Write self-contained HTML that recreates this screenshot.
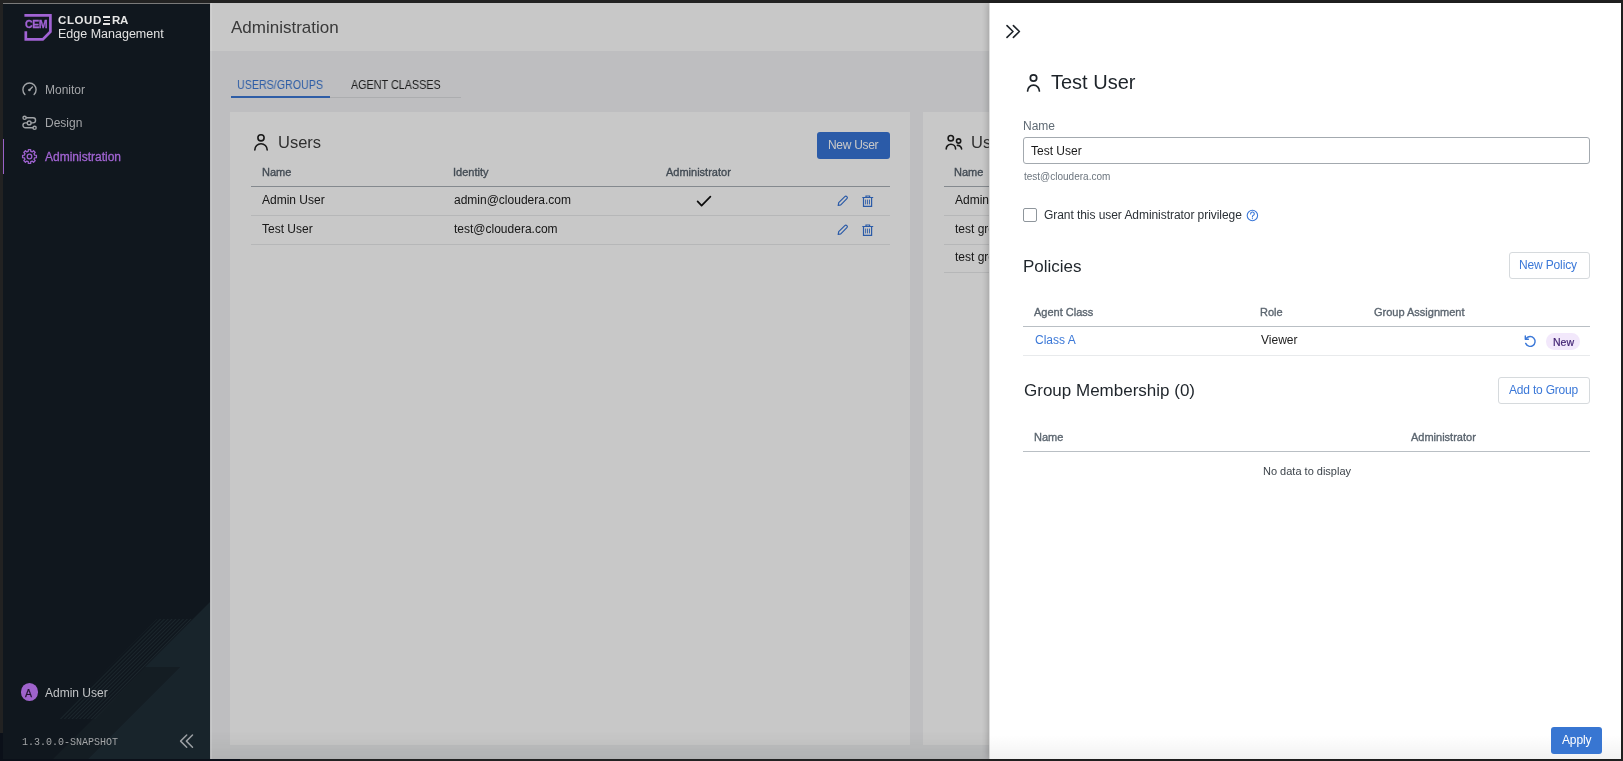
<!DOCTYPE html>
<html><head><meta charset="utf-8">
<style>
*{box-sizing:border-box;margin:0;padding:0}
html,body{width:1623px;height:761px;overflow:hidden;background:#222;font-family:"Liberation Sans",sans-serif}
.b{position:absolute}
.t{position:absolute;white-space:nowrap;line-height:1}
svg{position:absolute;overflow:visible}
.t{will-change:transform}
</style></head><body>
<!-- frame highlight line -->
<div class="b" style="left:0;top:733px;width:3px;height:28px;background:#0b1019"></div>
<div class="b" style="left:0;top:759px;width:240px;height:2px;background:#0b1019"></div>
<div class="b" style="left:3px;top:3px;width:207px;height:1px;background:#7a7a7a"></div>

<!-- ============ SIDEBAR ============ -->
<div class="b" style="left:3px;top:4px;width:207px;height:755px;background:#10171e"></div>
<svg style="left:0;top:0" width="210" height="759" viewBox="0 0 210 759">
  <defs>
    <clipPath id="sc"><rect x="3" y="4" width="207" height="755"/></clipPath>
    <pattern id="stripes" patternUnits="userSpaceOnUse" width="2.7" height="2.7" patternTransform="rotate(45)">
      <rect x="0" y="0" width="0.9" height="2.7" fill="#1c272d"/>
    </pattern>
  </defs>
  <g clip-path="url(#sc)">
    <polygon points="51,761 145,667 180,667 86,761" fill="#141d23"/>
    <polygon points="210,602 145,667 180,667 86,761 210,761" fill="#18242b"/>
    <polygon points="157,619 192,619 95,719 58,719" fill="url(#stripes)"/>
  </g>
</svg>
<!-- logo -->
<svg style="left:0;top:0" width="60" height="50" viewBox="0 0 60 50">
  <path d="M24.4,15.3 H50.4 V31.8 L42.8,39.4 H25.8 V31.3" fill="none" stroke="#a163d4" stroke-width="2.7"/>
</svg>
<div class="t" style="left:24.9px;top:19.1px;font-size:10.6px;font-weight:700;color:#a163d4;letter-spacing:-0.45px;-webkit-text-stroke:0.3px #a163d4">CEM</div>
<div class="t" style="left:57.6px;top:14.8px;font-size:11.5px;font-weight:700;color:#e6e6e6;letter-spacing:0.6px">CLOUD</div>
<div class="b" style="left:103.3px;top:16.2px;width:6.4px;height:1.7px;background:#e6e6e6"></div>
<div class="b" style="left:104.2px;top:19.6px;width:5.5px;height:1.7px;background:#e6e6e6"></div>
<div class="b" style="left:103.3px;top:23px;width:6.4px;height:1.7px;background:#e6e6e6"></div>
<div class="t" style="left:112.2px;top:14.8px;font-size:11.5px;font-weight:700;color:#e6e6e6;letter-spacing:-0.2px">RA</div>
<div class="t" style="left:58px;top:27.8px;font-size:12.5px;color:#e2e2e2">Edge Management</div>

<!-- nav -->
<svg style="left:0;top:0" width="60" height="180" viewBox="0 0 60 180" fill="none" stroke="#a0a3a6" stroke-width="1.4" stroke-linecap="round">
  <path d="M24.9,94.4 A6.6,6.6 0 1 1 34.1,94.4"/>
  <path d="M29.4,90 L32.4,87"/>
  <circle cx="29.4" cy="90" r="1.3" fill="#a0a3a6" stroke="none"/>
  <path d="M26.3,117.8 H33 A2.55,2.55 0 0 1 33,122.9 H31.1 M27.3,122.9 H25.4 A2.45,2.45 0 0 0 25.4,127.8 H32.9"/>
  <circle cx="24.6" cy="117.8" r="1.6"/>
  <circle cx="29.2" cy="122.9" r="1.9"/>
  <circle cx="34.6" cy="127.8" r="1.6"/>
  <g stroke="#9e62cf" stroke-width="1.3" stroke-linejoin="round">
    <path d="M28.22,151.36 L28.35,149.59 L30.65,149.59 L30.78,151.36 L32.23,151.96 L33.57,150.80 L35.20,152.43 L34.04,153.77 L34.64,155.22 L36.41,155.35 L36.41,157.65 L34.64,157.78 L34.04,159.23 L35.20,160.57 L33.57,162.20 L32.23,161.04 L30.78,161.64 L30.65,163.41 L28.35,163.41 L28.22,161.64 L26.77,161.04 L25.43,162.20 L23.80,160.57 L24.96,159.23 L24.36,157.78 L22.59,157.65 L22.59,155.35 L24.36,155.22 L24.96,153.77 L23.80,152.43 L25.43,150.80 L26.77,151.96Z"/>
    <circle cx="29.5" cy="156.5" r="2.3"/>
  </g>
</svg>
<div class="t" style="left:45px;top:83.8px;font-size:12px;color:#a3a5a8">Monitor</div>
<div class="t" style="left:45px;top:117.2px;font-size:12px;color:#a3a5a8">Design</div>
<div class="b" style="left:3px;top:139px;width:1px;height:35px;background:#9a62c8"></div>
<div class="t" style="left:45px;top:151.1px;font-size:12px;color:#a164d2;-webkit-text-stroke:0.3px #a164d2">Administration</div>

<!-- footer -->
<div class="b" style="left:21px;top:683.4px;width:17px;height:17.2px;border-radius:50%;background:#9f63cc"></div>
<div class="t" style="left:25.3px;top:687.5px;font-size:10.5px;color:#22142f;-webkit-text-stroke:0.25px #22142f">A</div>
<div class="t" style="left:44.7px;top:686.7px;font-size:12px;color:#c2c4c6">Admin User</div>
<div class="t" style="left:21.6px;top:737.6px;font-size:10px;font-family:'Liberation Mono',monospace;color:#a3a5a7;transform:scaleY(1.1);transform-origin:0 7.7px">1.3.0.0-SNAPSHOT</div>
<svg style="left:0;top:0" width="210" height="759" viewBox="0 0 210 759" fill="none" stroke="#9a9ea2" stroke-width="1.5" stroke-linecap="round" stroke-linejoin="round">
  <path d="M186.7,735 L180.6,741.1 L186.7,747.3 M192.5,735 L186.4,741.1 L192.5,747.3"/>
</svg>

<!-- ============ MAIN ============ -->
<div class="b" style="left:210px;top:3px;width:1411px;height:756px;background:#f2f3f5"></div>
<div class="b" style="left:210px;top:3px;width:1411px;height:48px;background:#fff"></div>
<div class="t" style="left:230.8px;top:18.9px;font-size:17px;color:#4a4a4a">Administration</div>

<!-- tabs -->
<div class="t" style="left:237.3px;top:79px;font-size:12px;color:#3b77d4;transform:scaleX(0.889);transform-origin:0 0">USERS/GROUPS</div>
<div class="t" style="left:350.9px;top:79px;font-size:12px;color:#262626;transform:scaleX(0.899);transform-origin:0 0">AGENT CLASSES</div>
<div class="b" style="left:231px;top:97px;width:230px;height:1px;background:#dcdde0"></div>
<div class="b" style="left:231px;top:96px;width:99px;height:2px;background:#3b77d4"></div>

<!-- card 1 -->
<div class="b" style="left:230px;top:112px;width:680px;height:633px;background:#fff"></div>
<svg style="left:0;top:0" width="1000" height="260" viewBox="0 0 1000 260" fill="none" stroke="#1f1f1f" stroke-width="1.6" stroke-linecap="round">
  <circle cx="261" cy="137.8" r="3.1"/>
  <path d="M254.8,149.9 A6.2,6.2 0 0 1 267.2,149.9"/>
</svg>
<div class="t" style="left:278.3px;top:134px;font-size:16.5px;color:#3e3e3e">Users</div>
<div class="b" style="left:817px;top:132px;width:73px;height:27px;border-radius:3px;background:#3774d6"></div>
<div class="t" style="left:827.9px;top:139px;font-size:12px;color:#fff;letter-spacing:-0.3px">New User</div>

<div class="t" style="left:261.6px;top:166.7px;font-size:11px;color:#56616c;-webkit-text-stroke:0.35px #56616c">Name</div>
<div class="t" style="left:452.8px;top:166.7px;font-size:11px;color:#56616c;-webkit-text-stroke:0.35px #56616c">Identity</div>
<div class="t" style="left:666.2px;top:166.7px;font-size:11px;color:#56616c;-webkit-text-stroke:0.35px #56616c">Administrator</div>
<div class="b" style="left:251px;top:185.5px;width:639px;height:1.5px;background:#a9afb5"></div>

<div class="t" style="left:262.1px;top:193.5px;font-size:12px;color:#202020">Admin User</div>
<div class="t" style="left:453.5px;top:193.5px;font-size:12px;color:#202020">admin@cloudera.com</div>
<div class="b" style="left:251px;top:215px;width:639px;height:1px;background:#e9eaeb"></div>
<div class="t" style="left:262.1px;top:222.5px;font-size:12px;color:#202020">Test User</div>
<div class="t" style="left:453.5px;top:222.5px;font-size:12px;color:#202020">test@cloudera.com</div>
<div class="b" style="left:251px;top:244px;width:639px;height:1px;background:#e9eaeb"></div>

<svg style="left:0;top:0" width="1000" height="260" viewBox="0 0 1000 260" fill="none" stroke-linecap="round" stroke-linejoin="round">
  <path d="M697.6,201.3 L701.6,205.6 L710.4,196.6" stroke="#111" stroke-width="1.7"/>
  <g stroke="#3774d6" stroke-width="1.2">
    <path d="M838.2,205.5 L838.7,202.7 L844.8,196.6 A1.45,1.45 0 0 1 846.9,198.7 L840.8,204.8 Z"/>
    <path d="M862.3,197.5 H873.2 M866,197.0 V196.0 H869.6 V197.0 M863.5,197.8 V206.3 H871.6 V197.8" stroke-width="1.2" stroke-linejoin="miter" stroke-linecap="butt"/>
    <path d="M865.6,199.6 V204.4 M867.55,199.6 V204.4 M869.5,199.6 V204.4" stroke-width="0.9" stroke-linecap="butt"/>
    <path d="M838.2,234.5 L838.7,231.7 L844.8,225.6 A1.45,1.45 0 0 1 846.9,227.7 L840.8,233.8 Z"/>
    <path d="M862.3,226.5 H873.2 M866,226.0 V225.0 H869.6 V226.0 M863.5,226.8 V235.3 H871.6 V226.8" stroke-width="1.2" stroke-linejoin="miter" stroke-linecap="butt"/>
    <path d="M865.6,228.6 V233.4 M867.55,228.6 V233.4 M869.5,228.6 V233.4" stroke-width="0.9" stroke-linecap="butt"/>
  </g>
</svg>

<!-- card 2 -->
<div class="b" style="left:923px;top:112px;width:680px;height:633px;background:#fff"></div>
<svg style="left:0;top:0" width="1000" height="260" viewBox="0 0 1000 260" fill="none" stroke="#1f1f1f" stroke-width="1.6" stroke-linecap="round">
  <circle cx="950.8" cy="138.2" r="2.7"/>
  <path d="M946.2,149 A4.7,4.7 0 0 1 955.6,149"/>
  <circle cx="958.6" cy="141" r="2.1"/>
  <path d="M957.4,145.4 A3.8,3.8 0 0 1 961.6,149"/>
</svg>
<div class="t" style="left:971px;top:134px;font-size:16.5px;color:#3e3e3e">Users</div>
<div class="t" style="left:954.4px;top:166.7px;font-size:11px;color:#56616c;-webkit-text-stroke:0.35px #56616c">Name</div>
<div class="b" style="left:944px;top:185.5px;width:600px;height:1.5px;background:#a9afb5"></div>
<div class="t" style="left:954.9px;top:193.5px;font-size:12px;color:#202020">Admin Group</div>
<div class="b" style="left:944px;top:215px;width:600px;height:1px;background:#e9eaeb"></div>
<div class="t" style="left:954.9px;top:222.5px;font-size:12px;color:#202020">test group 1</div>
<div class="b" style="left:944px;top:244px;width:600px;height:1px;background:#e9eaeb"></div>
<div class="t" style="left:954.9px;top:251.3px;font-size:12px;color:#202020">test group 2</div>
<div class="b" style="left:944px;top:272px;width:600px;height:1px;background:#e9eaeb"></div>

<div class="b" style="left:210px;top:729px;width:780px;height:30px;background:linear-gradient(to bottom,rgba(0,0,0,0),rgba(0,0,0,0.065))"></div>
<!-- overlay -->
<div class="b" style="left:210px;top:3px;width:1411px;height:756px;background:rgba(0,0,0,0.216)"></div>

<div class="b" style="left:211px;top:3px;width:1px;height:756px;background:rgba(255,255,255,0.14)"></div>
<!-- ============ DRAWER ============ -->
<div class="b" style="left:989px;top:3px;width:632px;height:756px;background:#fff;border-left:1px solid #dedede;box-shadow:-1px 0 7px rgba(0,0,0,0.22)"></div>
<svg style="left:0;top:0" width="1623" height="761" viewBox="0 0 1623 761" fill="none" stroke-linecap="round" stroke-linejoin="round">
  <path d="M1007,25.6 L1013,31.5 L1007,37.4 M1013.4,25.6 L1019.4,31.5 L1013.4,37.4" stroke="#1d2329" stroke-width="1.6"/>
  <g stroke="#1d2329" stroke-width="1.7">
    <circle cx="1033.5" cy="78" r="3.2"/>
    <path d="M1027.6,91 A5.9,5.9 0 0 1 1039.4,91"/>
  </g>
  <circle cx="1252.4" cy="215.5" r="5.2" stroke="#3b78d8" stroke-width="1.1"/>
  <path d="M1250.6,213.9 A1.85,1.85 0 1 1 1253.1,215.6 Q1252.4,216 1252.4,217" stroke="#3b78d8" stroke-width="1.1"/>
  <circle cx="1252.4" cy="218.6" r="0.6" fill="#3b78d8"/>
  <path d="M1526.4,338.3 A4.9,4.9 0 1 1 1525.7,343.4" stroke="#3b78d8" stroke-width="1.4"/>
  <path d="M1525.3,336 V339.2 H1528.4" stroke="#3b78d8" stroke-width="1.4"/>
</svg>
<div class="t" style="left:1051px;top:72.2px;font-size:20px;color:#1d2329">Test User</div>
<div class="t" style="left:1022.6px;top:119.9px;font-size:12px;color:#5f6a74">Name</div>
<div class="b" style="left:1023px;top:137px;width:567px;height:27px;border:1px solid #a3a9af;border-radius:3px"></div>
<div class="t" style="left:1031.3px;top:144.7px;font-size:12px;color:#1a1a1a">Test User</div>
<div class="t" style="left:1023.6px;top:172px;font-size:10px;color:#6c757e">test@cloudera.com</div>
<div class="b" style="left:1023px;top:208px;width:14px;height:14px;border:1px solid #8f969c;border-radius:2px"></div>
<div class="t" style="left:1044px;top:209.1px;font-size:12px;color:#2b3137;letter-spacing:-0.06px">Grant this user Administrator privilege</div>

<div class="t" style="left:1023px;top:258px;font-size:17px;color:#1f252b">Policies</div>
<div class="b" style="left:1509px;top:252px;width:80.5px;height:26.5px;border:1px solid #d6dadd;border-radius:3px"></div>
<div class="t" style="left:1519.2px;top:259px;font-size:12px;color:#3b78d8;letter-spacing:-0.15px">New Policy</div>

<div class="t" style="left:1034.1px;top:307.2px;font-size:11px;color:#5c6670;-webkit-text-stroke:0.35px #5c6670">Agent Class</div>
<div class="t" style="left:1260.1px;top:307.2px;font-size:11px;color:#5c6670;-webkit-text-stroke:0.35px #5c6670">Role</div>
<div class="t" style="left:1373.6px;top:307.2px;font-size:11px;color:#5c6670;-webkit-text-stroke:0.35px #5c6670">Group Assignment</div>
<div class="b" style="left:1023px;top:325.5px;width:567px;height:1.5px;background:#b9bfc4"></div>
<div class="t" style="left:1034.5px;top:334px;font-size:12px;color:#3b78d8">Class A</div>
<div class="t" style="left:1261px;top:334px;font-size:12px;color:#222">Viewer</div>
<div class="b" style="left:1546.3px;top:333px;width:33.6px;height:16.6px;border-radius:8.3px;background:#f2e8fb"></div>
<div class="t" style="left:1553.2px;top:336.6px;font-size:10.5px;color:#432574;-webkit-text-stroke:0.2px #432574">New</div>
<div class="b" style="left:1023px;top:355px;width:567px;height:1px;background:#e8eaec"></div>

<div class="t" style="left:1023.9px;top:382.4px;font-size:17px;color:#1f252b">Group Membership (0)</div>
<div class="b" style="left:1498px;top:377px;width:91.5px;height:26.5px;border:1px solid #d6dadd;border-radius:3px"></div>
<div class="t" style="left:1509.4px;top:384px;font-size:12px;color:#3b78d8;letter-spacing:-0.2px">Add to Group</div>
<div class="t" style="left:1034px;top:432px;font-size:11px;color:#5c6670;-webkit-text-stroke:0.35px #5c6670">Name</div>
<div class="t" style="left:1410.5px;top:432px;font-size:11px;color:#5c6670;-webkit-text-stroke:0.35px #5c6670">Administrator</div>
<div class="b" style="left:1023px;top:450.5px;width:567px;height:1.5px;background:#b9bfc4"></div>
<div class="t" style="left:1262.8px;top:465.6px;font-size:11px;color:#3d444b">No data to display</div>

<!-- bottom fade -->
<div class="b" style="left:989px;top:735px;width:632px;height:24px;background:linear-gradient(to bottom,rgba(0,0,0,0),rgba(0,0,0,0.05))"></div>
<div class="b" style="left:1551px;top:727px;width:51px;height:26.5px;border-radius:3px;background:#3876d2"></div>
<div class="t" style="left:1561.9px;top:734px;font-size:12px;color:#fff;letter-spacing:-0.15px">Apply</div>
</body></html>
